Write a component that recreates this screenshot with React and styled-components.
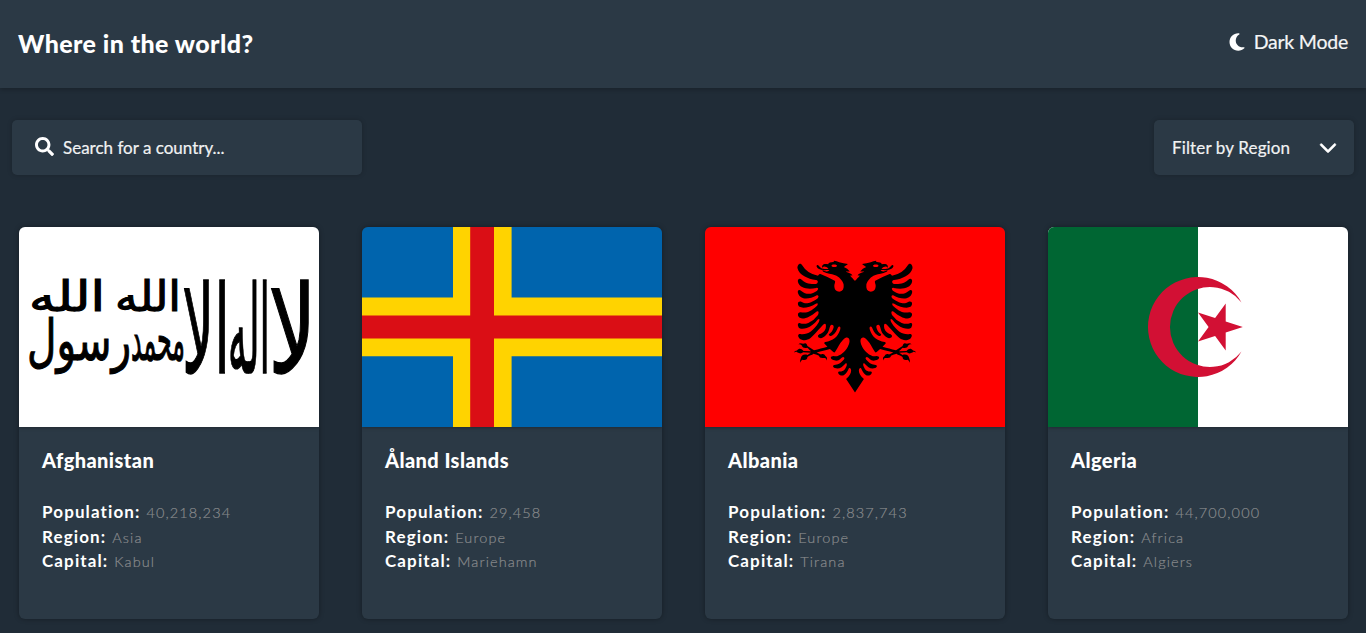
import React from "react";
import styled, { createGlobalStyle } from "styled-components";
import { FaMoon, FaChevronDown } from "react-icons/fa6";
import { FaSearch } from "react-icons/fa";

const GlobalStyle = createGlobalStyle`
  * { box-sizing: border-box; }
  body {
    margin: 0;
    background: #202c37;
    color: #fff;
    font-family: Lato, "Open Sans", sans-serif;
    overflow: hidden;
  }
`;

const Header = styled.header`
  display: flex;
  align-items: center;
  justify-content: space-between;
  height: 88px;
  padding: 0 18px 2px;
  background: #2b3945;
  box-shadow: 0 2px 4px rgba(0, 0, 0, 0.2);
`;

const Title = styled.h1`
  margin: 0;
  font-size: 25px;
  line-height: 32px;
  font-weight: 900;
  letter-spacing: 0.42px;
`;

const ThemeToggle = styled.button`
  display: flex;
  align-items: center;
  gap: 7px;
  padding: 0 0 2px;
  border: 0;
  background: none;
  color: #f4f5f6;
  font: 400 19.5px/28px Lato, sans-serif;
  letter-spacing: -0.22px;
  -webkit-text-stroke: 0.2px #f4f5f6;
  svg { width: 20px; height: 20px; margin-top: -1px; color: #fff; }
`;

const Toolbar = styled.div`
  display: flex;
  justify-content: space-between;
  padding: 32px 12px 0;
`;

const Control = styled.div`
  display: flex;
  align-items: center;
  justify-content: ${(p) => (p.$spread ? "space-between" : "flex-start")};
  gap: 9px;
  width: ${(p) => p.$width}px;
  height: 55px;
  padding: ${(p) => p.$padding};
  border-radius: 5px;
  background: #2b3945;
  box-shadow: 0 0 5px rgba(0, 0, 0, 0.2);
  color: #f1f2f3;
  font-size: 17px;
  line-height: 24px;
  white-space: nowrap;
  letter-spacing: ${(p) => (p.$spread ? "0.14px" : "0")};
  -webkit-text-stroke: 0.2px #f1f2f3;
  svg { flex: none; color: #fff; margin-top: -2px; }
`;

const Chevron = styled(FaChevronDown)`
  stroke: #fff;
  stroke-width: 16px;
`;

const Grid = styled.main`
  display: grid;
  grid-template-columns: repeat(4, 300px);
  justify-content: space-between;
  padding: 52px 18px 14px 19px;
`;

const Card = styled.article`
  height: 392px;
  overflow: hidden;
  border-radius: 6px;
  background: #2b3945;
  box-shadow: 0 0 5px rgba(0, 0, 0, 0.35);
`;

const Flag = styled.svg`
  display: block;
  width: 300px;
  height: 200px;
  box-shadow: 0 0 4px rgba(0, 0, 0, 0.4);
`;

const CardBody = styled.div`
  padding: 20px 23px;
`;

const CountryName = styled.h2`
  margin: 0 0 26px;
  font-size: 20px;
  line-height: 27px;
  font-weight: 900;
  letter-spacing: 0.42px;
`;

const Fact = styled.p`
  margin: 0;
  font-size: 17px;
  line-height: 24.5px;
  font-weight: 700;
  letter-spacing: 1.12px;
`;

const FactValue = styled.span`
  margin-left: 0.7px;
  color: #888a8c;
  -webkit-text-stroke: 0.2px #888a8c;
  font-size: 14.5px;
  line-height: 0;
  font-weight: 300;
  letter-spacing: 1.1px;
`;

const Script = styled.text`
  font-family: "DejaVu Sans", sans-serif;
  font-weight: 400;
  fill: #000;
  stroke: #000;
  stroke-width: 1.1px;
  vector-effect: non-scaling-stroke;
`;

function Word({ x, y, width, tall = 1, size = 40, children }) {
  return (
    <Script
      transform={`translate(${x} ${y}) scale(1 ${tall})`}
      direction="ltr"
      fontSize={size}
      textLength={width}
      lengthAdjust="spacingAndGlyphs"
    >
      {children}
    </Script>
  );
}

function AfghanistanFlag() {
  return (
    <Flag viewBox="0 0 300 200">
      <rect width="300" height="200" fill="#fff" />
      <Word x={10} y={84} width={76} tall={1.05} size={40}>الله</Word>
      <Word x={96} y={84} width={66} tall={1.05} size={40}>الله</Word>
      <Word x={8} y={133} width={104} tall={1.05} size={54}>رسول</Word>
      <Word x={112} y={133} width={54} tall={1.15} size={52}>محمد</Word>
      <Word x={163} y={146} width={48} tall={1.75} size={70}>الا</Word>
      <Word x={209} y={146} width={42} tall={1.75} size={70}>اله</Word>
      <Word x={249} y={146} width={49} tall={1.75} size={70}>لا</Word>
    </Flag>
  );
}

function AlandFlag() {
  return (
    <Flag viewBox="0 0 300 200">
      <rect width="300" height="200" fill="#0064ad" />
      <path d="M91 0H149.6V70.4H300V129.3H149.6V200H91V129.3H0V70.4H91Z" fill="#ffd300" />
      <path d="M108.2 0H132V88.4H300V111.5H132V200H108.2V111.5H0V88.4H108.2Z" fill="#da0e15" />
    </Flag>
  );
}

const EAGLE_HALF =
  "M272 93.3c-4.6 0-12.3 1.5-12.2 5-13-2.1-14.3 3.2-13.5 8q2-2.9 3.9-3.1 2.5-.3 5.4 1.4a22 22 0 0 1 4.8 4.1c-4.6 1.1-8.2.4-11.8-.2a17 17 0 0 1-5.7-2.4c-1.5-1-2-2-4.3-4.3-2.7-2.8-5.6-2-4.7 2.3 2.1 4 5.6 5.8 10 6.6 2.1.3 5.3 1 8.9 1s7.6-.5 9.8 0c-1.3.8-2.8 2.3-5.8 2.8s-7.5-1.8-10.3-2.4c.3 2.3 3.3 4.5 9.1 5.7 9.6 2 17.5 3.6 22.8 6.5a37 37 0 0 1 10.9 9.2c4.7 5.5 5 9.8 5.2 10.8 1 8.8-2.1 13.8-7.9 15.4-2.8.7-8-.7-9.8-2.9-2-2.2-3.7-6-3.2-12 .5-2.2 3.1-8.3.9-9.5a274 274 0 0 0-32.3-15.1c-2.5-1-4.5 2.4-5.3 3.8a50 50 0 0 1-36-23.7c-4.2-7.6-11.3 0-10.1 7.3 1.9 8 8 13.8 15.4 18s17 8.2 26.5 8c5.2 1 5.1 7.6-1 8.9-12.1 0-21.8-.2-30.9-9-6.9-6.3-10.7 1.2-8.8 5.4 3.4 13.1 22.1 16.8 41 12.6 7.4-1.2 3 6.6 1 6.7-8 5.7-22.1 11.2-34.6 0-5.7-4.4-9.6-.8-7.4 5.5 5.5 16.5 26.7 13 41.2 5 3.7-2.1 7.1 2.7 2.6 6.4-18.1 12.6-27.1 12.8-35.3 8-10.2-4.1-11 7.2-5 11 6.7 4 23.8 1 36.4-7 5.4-4 5.6 2.3 2.2 4.8-14.9 12.9-20.8 16.3-36.3 14.2-7.7-.6-7.6 8.9-1.6 12.6 8.3 5.1 24.5-3.3 37-13.8 5.3-2.8 6.2 1.8 3.6 7.3a54 54 0 0 1-21.8 18c-7 2.7-13.6 2.3-18.3.7-5.8-2-6.5 4-3.3 9.4 1.9 3.3 9.8 4.3 18.4 1.3s17.8-10.2 24.1-18.5c5.5-4.9 4.9 1.6 2.3 6.2-12.6 20-24.2 27.4-39.5 26.2-6.7-1.2-8.3 4-4 9 7.6 6.2 17 6 25.4-.2 7.3-7 21.4-22.4 28.8-30.6 5.2-4.1 6.9 0 5.3 8.4-1.4 4.8-4.8 10-14.3 13.6-6.5 3.7-1.6 8.8 3.2 9 2.7 0 8.1-3.2 12.3-7.8 5.4-6.2 5.8-10.3 8.8-19.9 2.8-4.6 7.9-2.4 7.9 2.4-2.5 9.6-4.5 11.3-9.5 15.2-4.7 4.5 3.3 6 6 4.1 7.8-5.2 10.6-12 13.2-18.2 2-4.4 7.4-2.3 4.8 5-6 17.4-16 24.2-33.3 27.8-1.7.3-2.8 1.3-2.2 3.3l7 7c-10.7 3.2-19.4 5-30.2 8l-14.8-9.8c-1.3-3.2-2-8.2-9.8-4.7-5.2-2.4-7.7-1.5-10.6 1 4.2 0 6 1.2 7.7 3.1 2.2 5.7 7.2 6.3 12.3 4.7 3.3 2.7 5 4.9 8.4 7.7l-16.7-.5c-6-6.3-10.6-6-14.8-1-3.3.5-4.6.5-6.8 4.4 3.4-1.4 5.6-1.8 7.1-.3 6.3 3.7 10.4 2.9 13.5 0l17.5 1.1c-2.2 2-5.2 3-7.5 4.8-9-2.6-13.8 1-15.4 8.3a17 17 0 0 0-1.2 9.3q1.1-4.6 4.9-7c8 2 11-1.3 11.5-6.1 4-3.2 9.8-3.9 13.7-7.1 4.6 1.4 6.8 2.3 11.4 3.8q2.4 7.5 11.3 5.6c7 .2 5.8 3.2 6.4 5.5 2-3.3 1.9-6.6-2.5-9.6-1.6-4.3-5.2-6.3-9.8-3.8-4.4-1.2-5.5-3-9.9-4.3 11-3.5 18.8-4.3 29.8-7.8l7.7 6.8q2.4 1.4 3.8 0c6.9-10.5 10-19 16.3-25.3 2.5-2.8 5.6-6.4 9-7.3 1.7-.5 3.8-.2 5.2 1.3 1.3 1.4 2.4 4.1 2 8.2-.7 5.7-2.1 7.6-3.7 11s-3.6 5.6-5.7 8.3c-4 5.3-9.4 8.4-12.6 10.5-6.4 4.1-9 2.3-14 2-6.4.7-8 3.8-2.8 8.1 4.8 2.6 9.2 2.9 12.8 2.2 3-.6 6.6-4.5 9.2-6.6 2.8-3.3 7.6.6 4.3 4.5-5.9 7-11.7 11.6-19 11.5-7.7 1-6.2 5.3-1.2 7.4 9.2 3.7 17.4-3.3 21.6-8 3.2-3.5 5.5-3.6 5 1.9-3.3 9.9-7.6 13.7-14.8 14.2-5.8-.6-5.9 4-1.6 7 9.6 6.6 16.6-4.8 19.9-11.6 2.3-6.2 5.9-3.3 6.3 1.8 0 6.9-3 12.4-11.3 19.4 6.3 10.1 13.7 20.4 20 30.5l.5-250.5c-2-1.8-8.8-9.8-10.5-11-.7-.6-1-1-.1-1.4s3-.8 4.5-1c-4-4.1-7.6-5.4-15.3-7.6 1.9-.8 3.7-.4 9.3-.6a30 30 0 0 0-13.5-10.2c4.2-3 5-3.2 9.2-6.7a86 86 0 0 1-19.5-3.8 37 37 0 0 0-12-3.4m.8 8.4c3.8 0 6.1 1.3 6.1 2.9s-2.3 2.9-6.1 2.9-6.2-1.5-6.2-3c0-1.6 2.4-2.8 6.2-2.8";

function AlbaniaFlag() {
  return (
    <Flag viewBox="0 0 300 200">
      <rect width="300" height="200" fill="#f00" />
      <g fillRule="evenodd">
        <path transform="translate(150 35) scale(.445) translate(-320 -93.3)" d={EAGLE_HALF} />
        <path transform="translate(150 35) scale(-.445 .445) translate(-320 -93.3)" d={EAGLE_HALF} />
      </g>
    </Flag>
  );
}

function AlgeriaFlag() {
  return (
    <Flag viewBox="0 0 300 200">
      <rect width="300" height="200" fill="#fff" />
      <rect width="150" height="200" fill="#063" />
      <path
        fill="#d21034"
        d="M193.5 75.4A50 50 0 1 0 193.5 124.6A40 40 0 1 1 193.5 75.4ZM194.8 100L177.7 94.4V76.4L167.1 90.9L150 85.4L160.6 100L150 114.6L167.1 109.1L177.7 123.6V105.6Z"
      />
    </Flag>
  );
}

const COUNTRIES = [
  { name: "Afghanistan", population: "40,218,234", region: "Asia", capital: "Kabul", FlagArt: AfghanistanFlag },
  { name: "Åland Islands", population: "29,458", region: "Europe", capital: "Mariehamn", FlagArt: AlandFlag },
  { name: "Albania", population: "2,837,743", region: "Europe", capital: "Tirana", FlagArt: AlbaniaFlag },
  { name: "Algeria", population: "44,700,000", region: "Africa", capital: "Algiers", FlagArt: AlgeriaFlag },
];

export default function App() {
  return (
    <>
      <GlobalStyle />
      <Header>
        <Title>Where in the world?</Title>
        <ThemeToggle>
          <FaMoon />
          Dark Mode
        </ThemeToggle>
      </Header>
      <Toolbar>
        <Control $width={350} $padding="0 23px">
          <FaSearch size={19} />
          <span>Search for a country...</span>
        </Control>
        <Control $width={200} $padding="0 17px 0 18px" $spread>
          <span>Filter by Region</span>
          <Chevron size={18} />
        </Control>
      </Toolbar>
      <Grid>
        {COUNTRIES.map(({ name, population, region, capital, FlagArt }) => (
          <Card key={name}>
            <FlagArt />
            <CardBody>
              <CountryName>{name}</CountryName>
              <Fact>Population: <FactValue>{population}</FactValue></Fact>
              <Fact>Region: <FactValue>{region}</FactValue></Fact>
              <Fact>Capital: <FactValue>{capital}</FactValue></Fact>
            </CardBody>
          </Card>
        ))}
      </Grid>
    </>
  );
}
